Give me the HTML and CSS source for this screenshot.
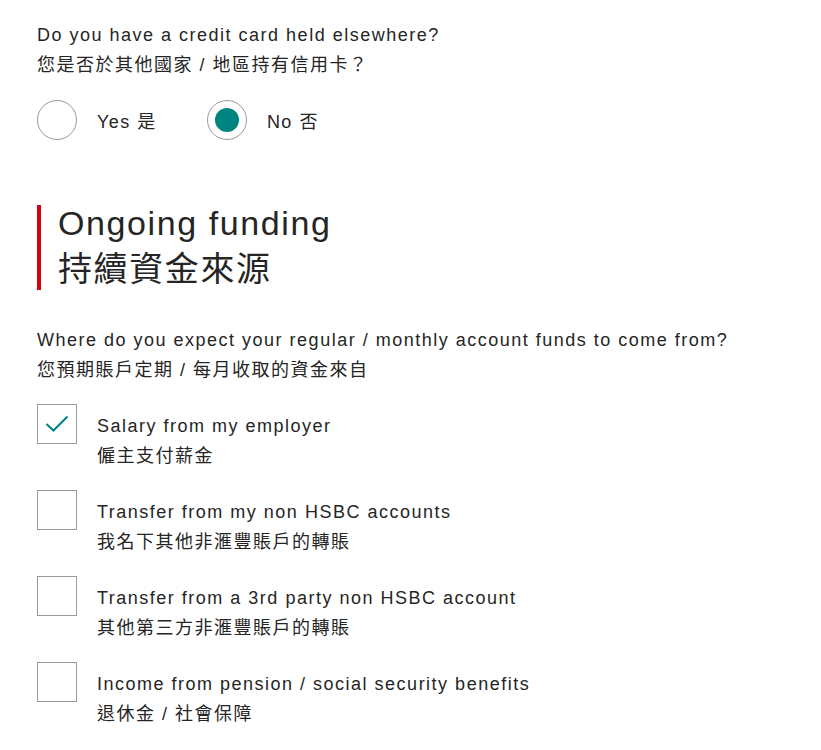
FILE: index.html
```html
<!DOCTYPE html>
<html lang="zh-Hant">
<head>
    <meta charset="UTF-8">
    <meta name="viewport" content="width=device-width, initial-scale=1.0">
    <title>Ongoing funding</title>
    <link rel="stylesheet" href="styles.css">
</head>
<body>
    <div class="form">
        <div class="question">
            <p class="label">Do you have a credit card held elsewhere?<br>您是否於其他國家 / 地區持有信用卡？</p>
            <div class="radios">
                <label class="radio">
                    <span class="circle"></span>
                    <span>Yes 是</span>
                </label>
                <label class="radio selected">
                    <span class="circle"></span>
                    <span>No 否</span>
                </label>
            </div>
        </div>

        <h2 class="section-title">Ongoing funding<br>持續資金來源</h2>

        <div class="question">
            <p class="label">Where do you expect your regular / monthly account funds to come from?<br>您預期賬戶定期 / 每月收取的資金來自</p>
            <div class="checks">
                <label class="check checked">
                    <span class="box">
                        <svg width="24" height="18" viewBox="0 0 24 18"><path d="M1.5 9 L8.5 15.5 L22.5 1.5" fill="none" stroke="#00847f" stroke-width="2"/></svg>
                    </span>
                    <span class="text">Salary from my employer<br>僱主支付薪金</span>
                </label>
                <label class="check">
                    <span class="box"></span>
                    <span class="text">Transfer from my non HSBC accounts<br>我名下其他非滙豐賬戶的轉賬</span>
                </label>
                <label class="check">
                    <span class="box"></span>
                    <span class="text">Transfer from a 3rd party non HSBC account<br>其他第三方非滙豐賬戶的轉賬</span>
                </label>
                <label class="check">
                    <span class="box"></span>
                    <span class="text">Income from pension / social security benefits<br>退休金 / 社會保障</span>
                </label>
            </div>
        </div>
    </div>
</body>
</html>
```

FILE: styles.css
```css
body {
    margin: 0;
    font-family: "Liberation Sans", "Noto Sans CJK TC", sans-serif;
    color: #252525;
    background-color: #fff;
}
.form {
    padding: 20px 37px;
}
.label {
    margin: 0;
    font-size: 18px;
    line-height: 30px;
    letter-spacing: 1.5px;
}
.radios {
    display: flex;
    gap: 50px;
    margin-top: 20px;
}
.radio {
    display: flex;
    align-items: center;
    gap: 20px;
    font-size: 18px;
    letter-spacing: 1.5px;
}
.circle {
    width: 38px;
    height: 38px;
    border: 1px solid #999;
    border-radius: 50%;
    display: flex;
    align-items: center;
    justify-content: center;
}
.radio.selected .circle::after {
    content: "";
    width: 24px;
    height: 24px;
    border-radius: 50%;
    background-color: #00847f;
}
/* red bar is a bit shorter than the two title lines */
.section-title {
    margin: 60px 0 0;
    padding-left: 21px;
    background: linear-gradient(#db0011, #db0011) no-repeat 0 5px / 4px 85px;
    font-size: 34px;
    font-weight: normal;
    line-height: 46px;
    letter-spacing: 1.6px;
}
.section-title + .question {
    margin-top: 33px;
}
.checks {
    display: flex;
    flex-direction: column;
    gap: 19px;
    margin-top: 19px;
}
.check {
    display: flex;
    gap: 20px;
    font-size: 18px;
    letter-spacing: 1.5px;
}
.box {
    width: 38px;
    height: 38px;
    border: 1px solid #999;
    display: flex;
    align-items: center;
    justify-content: center;
    flex-shrink: 0;
}
.text {
    line-height: 30px;
    margin-top: 7px;
}
```
